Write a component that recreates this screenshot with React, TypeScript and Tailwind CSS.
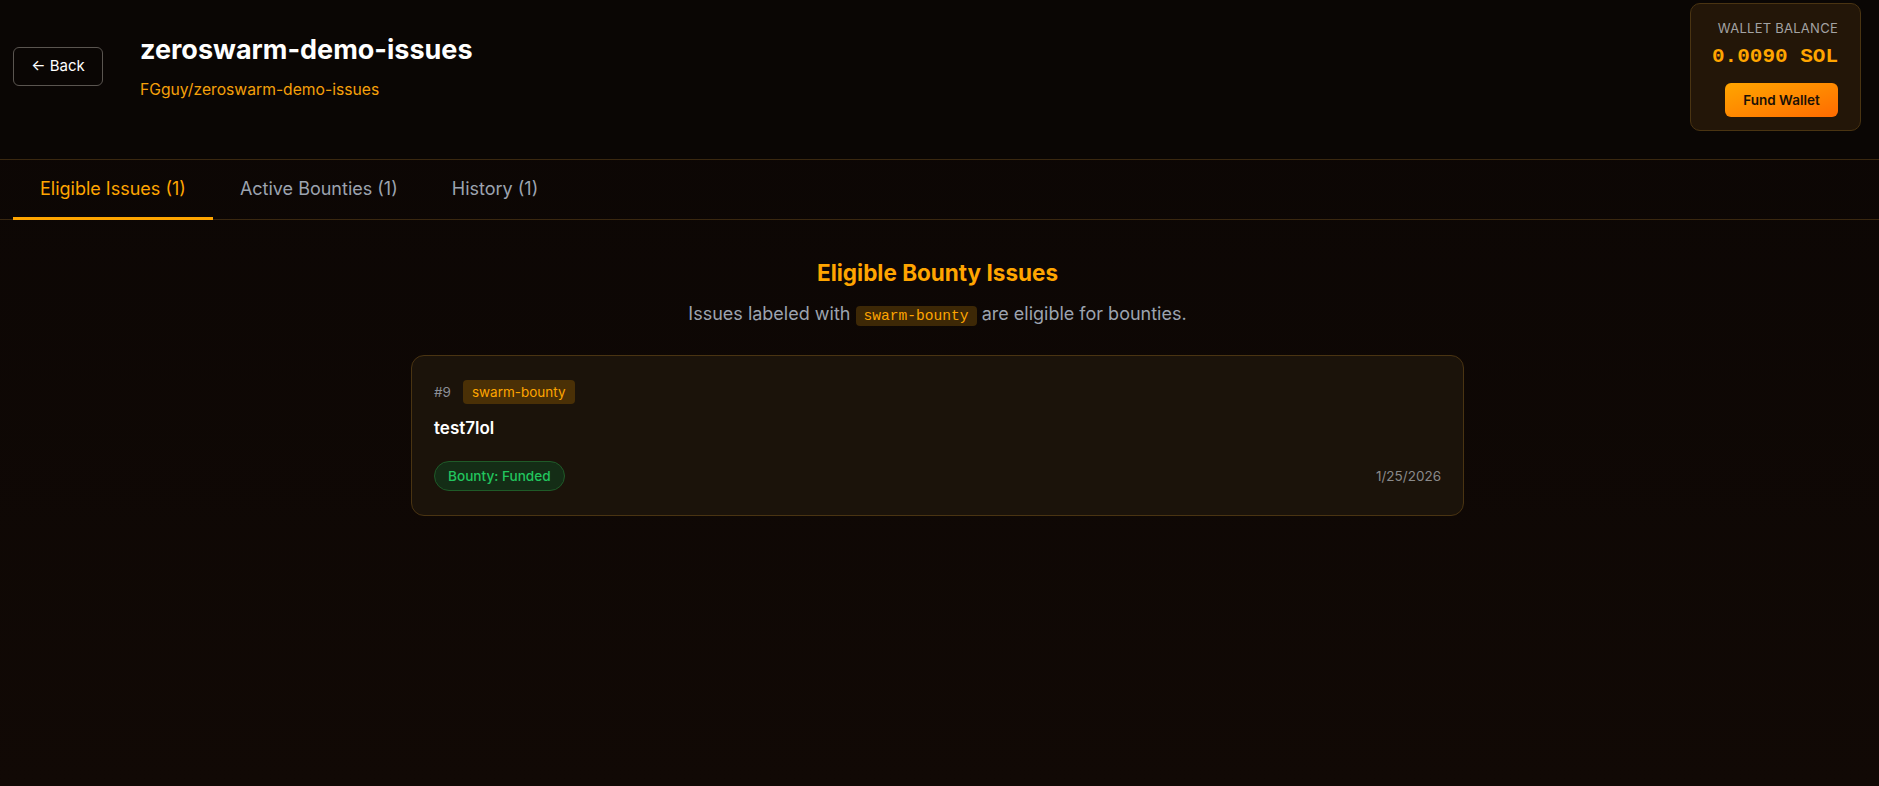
import { useState } from "react"

const tabs = [
  { id: "eligible", label: "Eligible Issues (1)" },
  { id: "active", label: "Active Bounties (1)" },
  { id: "history", label: "History (1)" },
]

function WalletBox() {
  return (
    <div className="absolute top-[3px] right-[18px] flex h-[128px] w-[171px] flex-col items-end rounded-[10px] border border-[#4a3412] bg-[#231608] pr-[22px] pt-[15px]">
      <div className="text-[13px] leading-[18px] tracking-[0.02em] text-[#a3a3a3]">WALLET BALANCE</div>
      <div className="mt-[6px] font-['Liberation_Mono',monospace] text-[21px] font-bold leading-[28px] text-[#ffa500]">
        0.0090 SOL
      </div>
      <button className="mt-[12px] h-[34px] w-[113px] rounded-md bg-gradient-to-br from-[#ffa500] to-[#ff6a00] text-[13.5px] font-semibold text-[#1a1006]">
        Fund Wallet
      </button>
    </div>
  )
}

function IssueCard() {
  return (
    <div className="w-[1053px] rounded-[13px] border border-[#4a3412] bg-[#1b130a] px-[22px] pb-[24px] pt-[24px]">
      <div className="flex items-center gap-3">
        <span className="text-[13.5px] text-[#8b8f97]">#9</span>
        <span className="rounded-[4px] bg-[#4a3006] px-[9px] text-[13.5px] leading-6 text-[#ffa500]">swarm-bounty</span>
      </div>
      <div className="mt-[11px] text-[17px] font-semibold leading-[26px] text-white">test7lol</div>
      <div className="mt-5 flex items-center justify-between">
        <span className="rounded-full border border-[#1f5a28] bg-[#142d16] px-[13px] text-[13.6px] font-medium leading-[28px] text-[#22c55e]">
          Bounty: Funded
        </span>
        <span className="text-[13.5px] text-[#8a8a8a]">1/25/2026</span>
      </div>
    </div>
  )
}

export default function App() {
  const [active, setActive] = useState("eligible")

  return (
    <div className="relative min-h-screen bg-gradient-to-b from-[#0b0604] to-[#110905] font-['Inter',sans-serif]">
      <header className="flex h-[160px] items-start gap-[37px] border-b border-[#3a2810] bg-[#0a0604] px-[13px] pt-[34px]">
        <button className="mt-[13px] h-[39px] w-[90px] rounded-md border border-[#5a5550] text-[15px] text-white">
          ← Back
        </button>
        <div>
          <h1 className="text-[27px] font-bold leading-[32px] text-white">zeroswarm-demo-issues</h1>
          <div className="mt-[13px] text-[15.7px] leading-[22px] text-[#f5a00a]">FGguy/zeroswarm-demo-issues</div>
        </div>
      </header>

      <WalletBox />

      <nav className="flex border-b border-[#3a2810] px-[13px]">
        {tabs.map((t) => (
          <button
            key={t.id}
            onClick={() => setActive(t.id)}
            className={
              t.id === active
                ? "-mb-px border-b-[3px] border-[#ffa500] px-[27px] pb-[14px] pt-[15px] text-[18px] leading-7 text-[#ffa500]"
                : "-mb-px border-b-[3px] border-transparent px-[27px] pb-[14px] pt-[15px] text-[18px] leading-7 text-[#9ca3af]"
            }
          >
            {t.label}
          </button>
        ))}
      </nav>

      <main className="flex flex-col items-center pr-[4px] pt-[37px]">
        <h2 className="text-[22.5px] font-bold leading-8 text-[#ffa500]">Eligible Bounty Issues</h2>
        <p className="mt-3 text-[18px] leading-[26px] text-[#9ca3af]">
          Issues labeled with{" "}
          <code className="rounded-[4px] bg-[#3d2806] px-2 py-[2px] font-['Liberation_Mono',monospace] text-[14.6px] text-[#ffa500]">
            swarm-bounty
          </code>{" "}
          are eligible for bounties.
        </p>
        <div className="mt-[26px]">
          <IssueCard />
        </div>
      </main>
    </div>
  )
}
